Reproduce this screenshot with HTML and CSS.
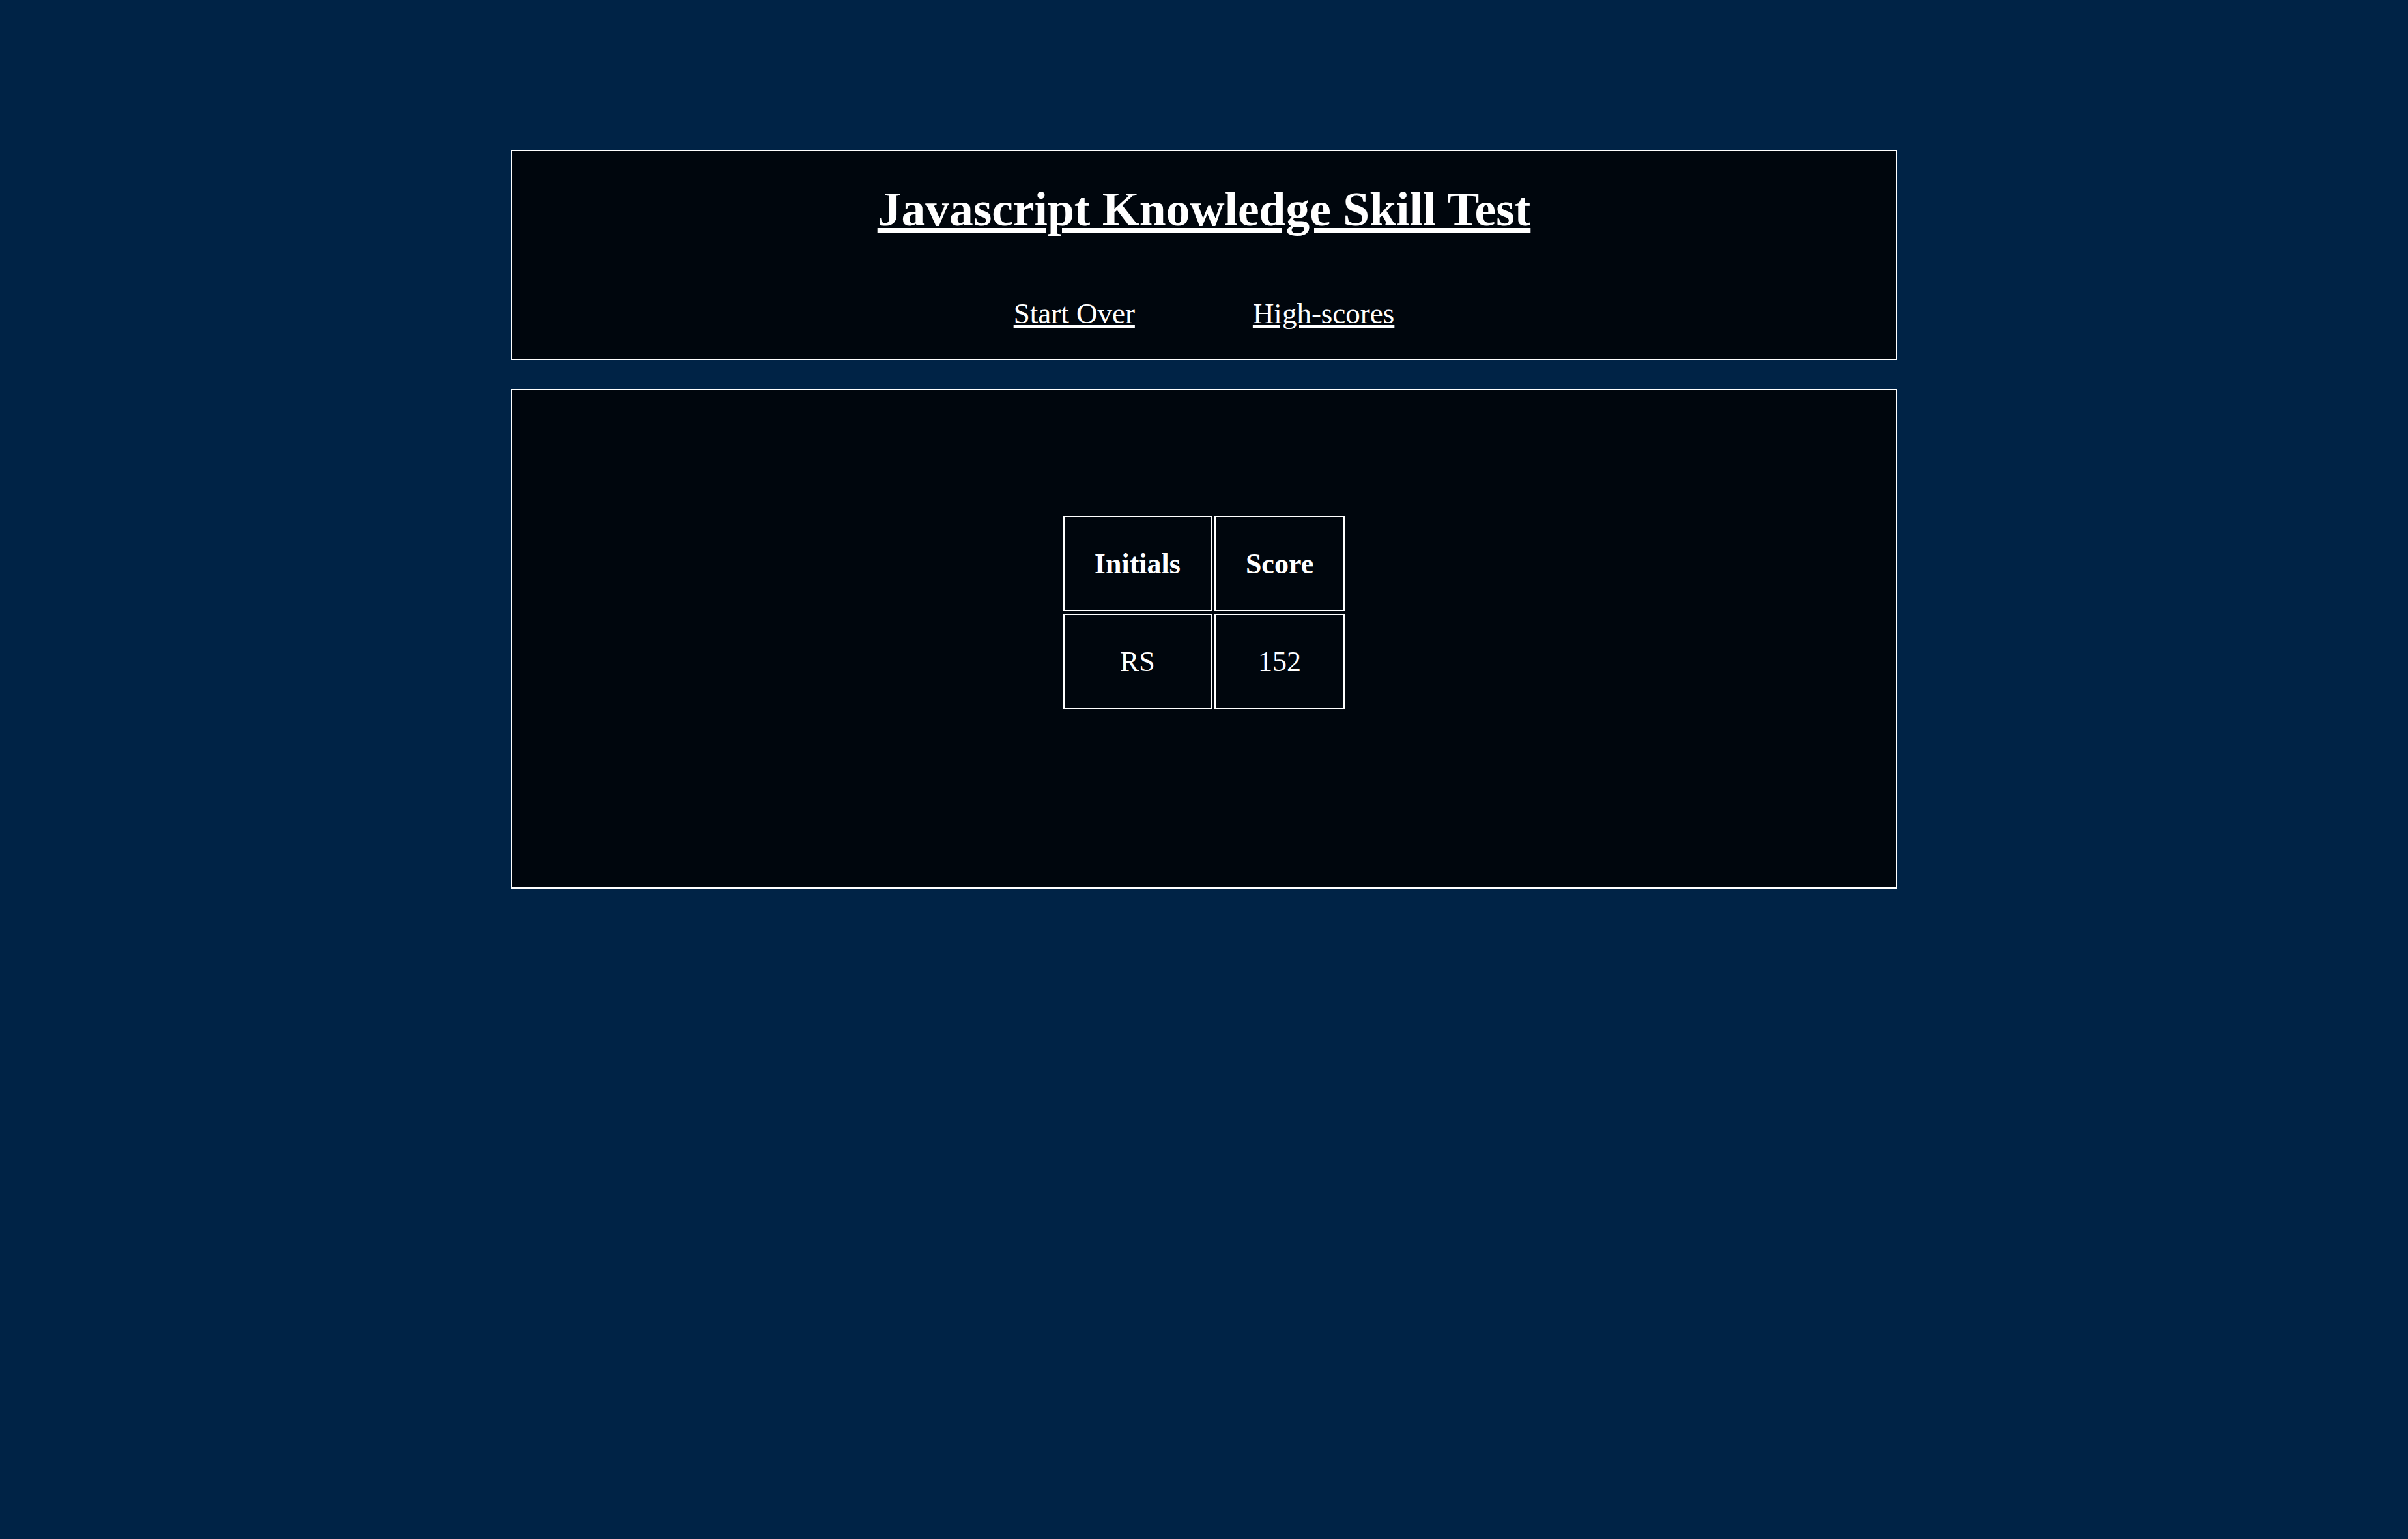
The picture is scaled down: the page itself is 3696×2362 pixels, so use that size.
FILE: index.html
```html
<!DOCTYPE html>
<html lang="en">
<head>
<meta charset="utf-8">
<title>Javascript Knowledge Skill Test</title>
<link rel="stylesheet" href="styles.css">
</head>
<body>
<div class="page">
  <header class="panel header">
    <h1 class="title"><a href="#">Javascript Knowledge Skill Test</a></h1>
    <nav class="nav">
      <a href="#">Start Over</a>
      <a href="#">High-scores</a>
    </nav>
  </header>
  <main class="panel scores">
    <table class="score-table">
      <thead>
        <tr><th>Initials</th><th>Score</th></tr>
      </thead>
      <tbody>
        <tr><td>RS</td><td>152</td></tr>
      </tbody>
    </table>
  </main>
</div>
</body>
</html>
```

FILE: styles.css
```css
html {
  background: #002346;
}
html, body {
  margin: 0;
  padding: 0;
}
body {
  color: #fff;
  font-family: "Liberation Serif", "Times New Roman", serif;
}
.page {
  width: 2128px;
  margin: 0 auto;
  padding-top: 230px;
  display: flex;
  flex-direction: column;
  gap: 44px;
}
.panel {
  background: #00060d;
  border: 2px solid #fff;
}
.header {
  padding: 48px 0 44px;
  display: flex;
  flex-direction: column;
  align-items: center;
}
.title {
  margin: 0;
  font-size: 73.5px;
  font-weight: bold;
  line-height: normal;
  text-align: center;
}
.title a, .nav a {
  color: #fff;
  text-decoration: underline;
}
.nav {
  margin-top: 91px;
  display: flex;
  justify-content: center;
  gap: 181px;
  font-size: 45px;
  line-height: normal;
}
.scores {
  padding: 189px 0 270px;
  display: flex;
  justify-content: center;
}
.score-table {
  border-collapse: separate;
  border-spacing: 4.6px;
  font-size: 44px;
}
.score-table th, .score-table td {
  border: 2px solid #fff;
  padding: 46px 46px 45px;
  text-align: center;
  line-height: normal;
}
.score-table th {
  font-weight: bold;
}
.score-table td {
  font-weight: normal;
}
```
